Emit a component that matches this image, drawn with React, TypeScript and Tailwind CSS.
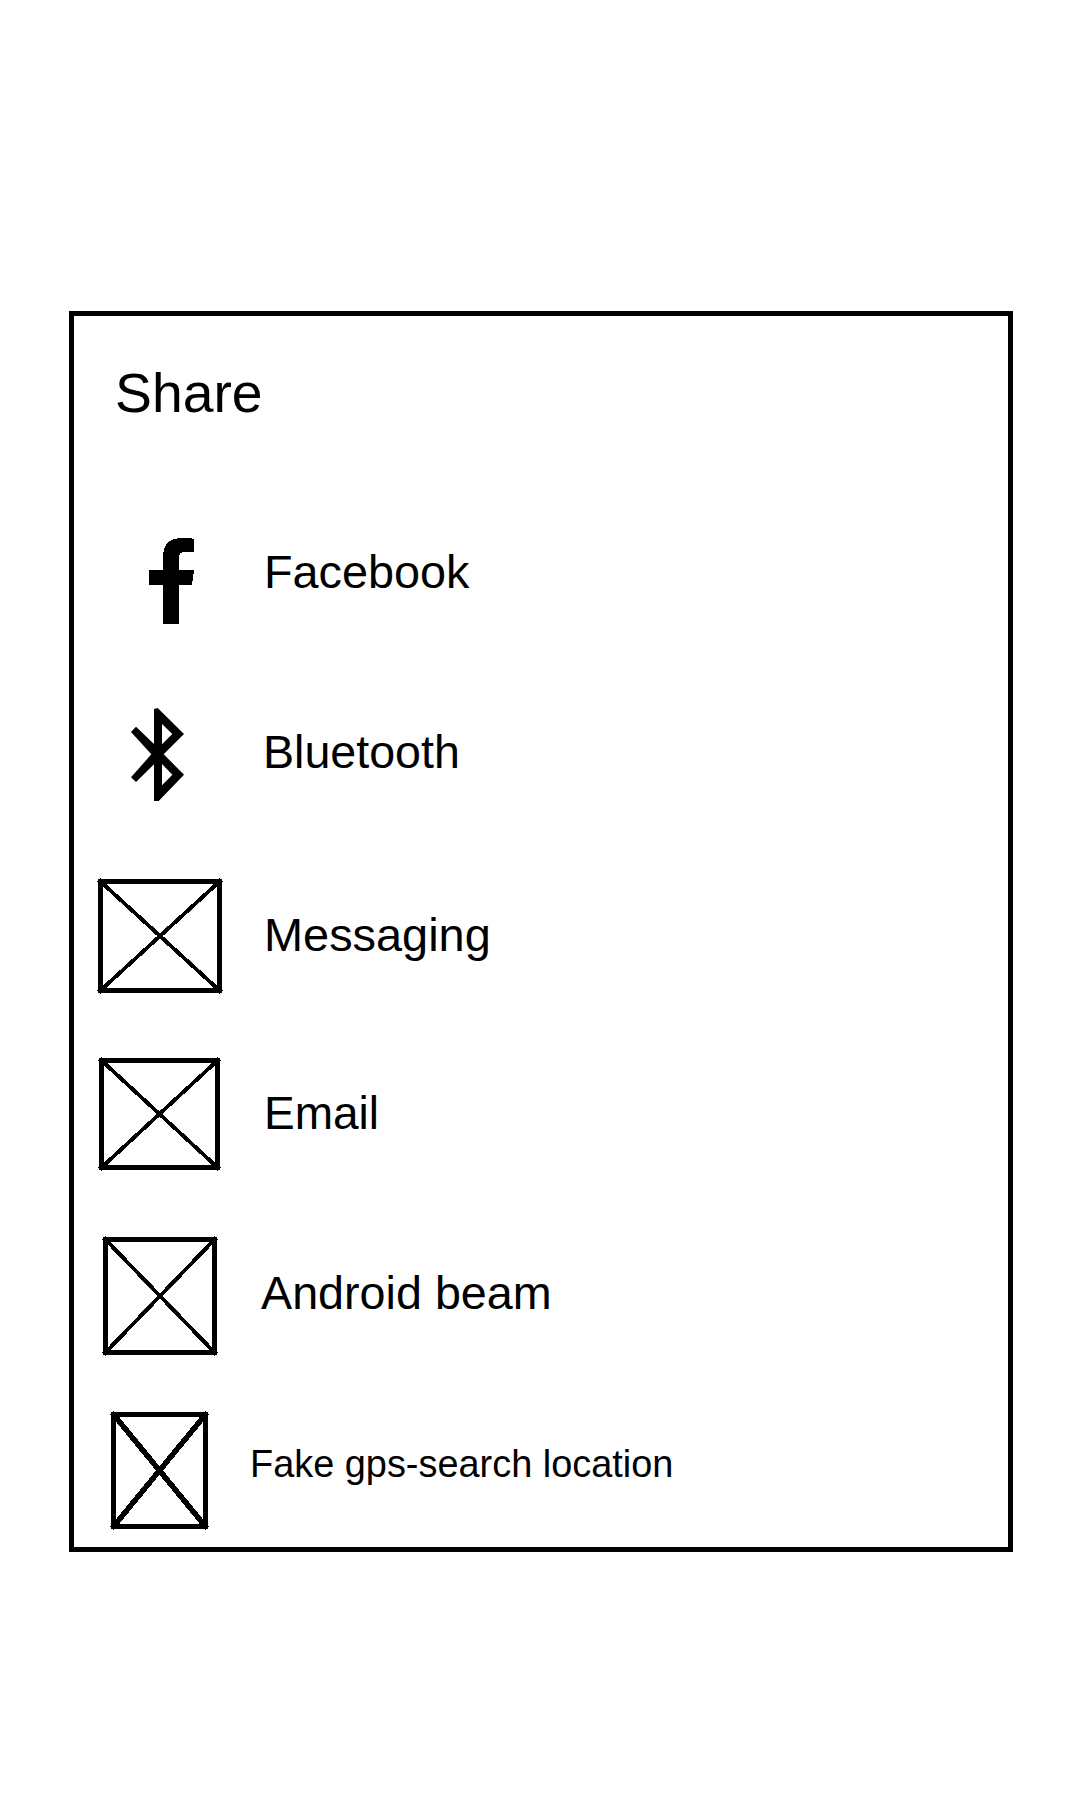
import type { ReactNode } from 'react';

function FacebookIcon() {
  return (
    <svg className="block h-[86px] w-[45px]" viewBox="87 54 135 258" shapeRendering="crispEdges" aria-hidden="true">
      <path d="M129 312V195H87V150H129V106C129 74 147 57 176 54H214L222 58V96H196Q177 96 177 111V150H222L216 195H177V312Z" />
    </svg>
  );
}

function BluetoothIcon() {
  return (
    <svg className="block h-[93px] w-[53px]" viewBox="63 54 159 279" aria-hidden="true">
      <path
        fillRule="evenodd"
        d="M132 57L143 54L222 132L161 193L222 254L146 333H132V223L78 276L63 262L124 193L63 126L78 110L132 162ZM156 102V163L187 132ZM156 222V286L187 254Z"
      />
    </svg>
  );
}

type PlaceholderProps = { width: number; height: number; stroke?: number };

function Placeholder({ width, height, stroke = 3.9 }: PlaceholderProps) {
  const right = width - 2.5;
  const bottom = height - 2.5;
  const corners = [
    [2.5, 2.5],
    [right, 2.5],
    [2.5, bottom],
    [right, bottom],
  ];
  return (
    <svg
      className="block overflow-visible"
      width={width}
      height={height}
      fill="none"
      stroke="black"
      shapeRendering="crispEdges"
      aria-hidden="true"
    >
      <rect x="2.5" y="2.5" width={width - 5} height={height - 5} strokeWidth="5" />
      <path d={`M2.5 2.5L${right} ${bottom}M${right} 2.5L2.5 ${bottom}`} strokeWidth={stroke} />
      {corners.map(([x, y]) => (
        <path key={`${x}-${y}`} d={`M${x - 3.5} ${y}h7M${x} ${y - 3.5}v7`} strokeWidth="1" />
      ))}
    </svg>
  );
}

type Target = { label: string; icon: ReactNode; row: string; iconPos: string; text: string };

const targets: Target[] = [
  {
    label: 'Facebook',
    icon: <FacebookIcon />,
    row: 'h-[180px]',
    iconPos: 'pl-[75px] pt-[38px]',
    text: 'pt-[42px] pl-[4px] text-[46.8px]',
  },
  {
    label: 'Bluetooth',
    icon: <BluetoothIcon />,
    row: 'h-[180px]',
    iconPos: 'pl-[57px] pt-[28px]',
    text: 'pt-[42px] pl-[3px] text-[46.6px]',
  },
  {
    label: 'Messaging',
    icon: <Placeholder width={124} height={114} />,
    row: 'h-[180px]',
    iconPos: 'pl-[24px] pt-[19px]',
    text: 'pt-[45px] pl-[4px] text-[46.9px]',
  },
  {
    label: 'Email',
    icon: <Placeholder width={121} height={112} />,
    row: 'h-[180px]',
    iconPos: 'pl-[25px] pt-[18px]',
    text: 'pt-[43px] pl-[4px] text-[46px]',
  },
  {
    label: 'Android beam',
    icon: <Placeholder width={114} height={118} />,
    row: 'h-[180px]',
    iconPos: 'pl-[29px] pt-[17px]',
    text: 'pt-[43px] pl-[1px] text-[46.7px]',
  },
  {
    label: 'Fake gps-search location',
    icon: <Placeholder width={97} height={117} stroke={5.5} />,
    row: 'h-[147px]',
    iconPos: 'pl-[37px] pt-[12px]',
    text: 'pt-[34px] -ml-[10px] text-[37.9px]',
  },
];

export default function App() {
  return (
    <main className="h-[1800px] w-[1080px] bg-white pt-[311px] pl-[69px] font-['Liberation_Sans',Arial,sans-serif] text-black">
      <section className="h-[1241px] w-[944px] border-[5px] border-black">
        <h1 className="h-[184px] pt-[47px] pl-[41px] text-[55.3px] leading-[60px] font-normal">Share</h1>
        <ul>
          {targets.map((target) => (
            <li key={target.label} className={`flex items-start ${target.row}`}>
              <div className={`w-[186px] shrink-0 ${target.iconPos}`}>{target.icon}</div>
              <span className={`leading-[60px] whitespace-nowrap ${target.text}`}>{target.label}</span>
            </li>
          ))}
        </ul>
      </section>
    </main>
  );
}
